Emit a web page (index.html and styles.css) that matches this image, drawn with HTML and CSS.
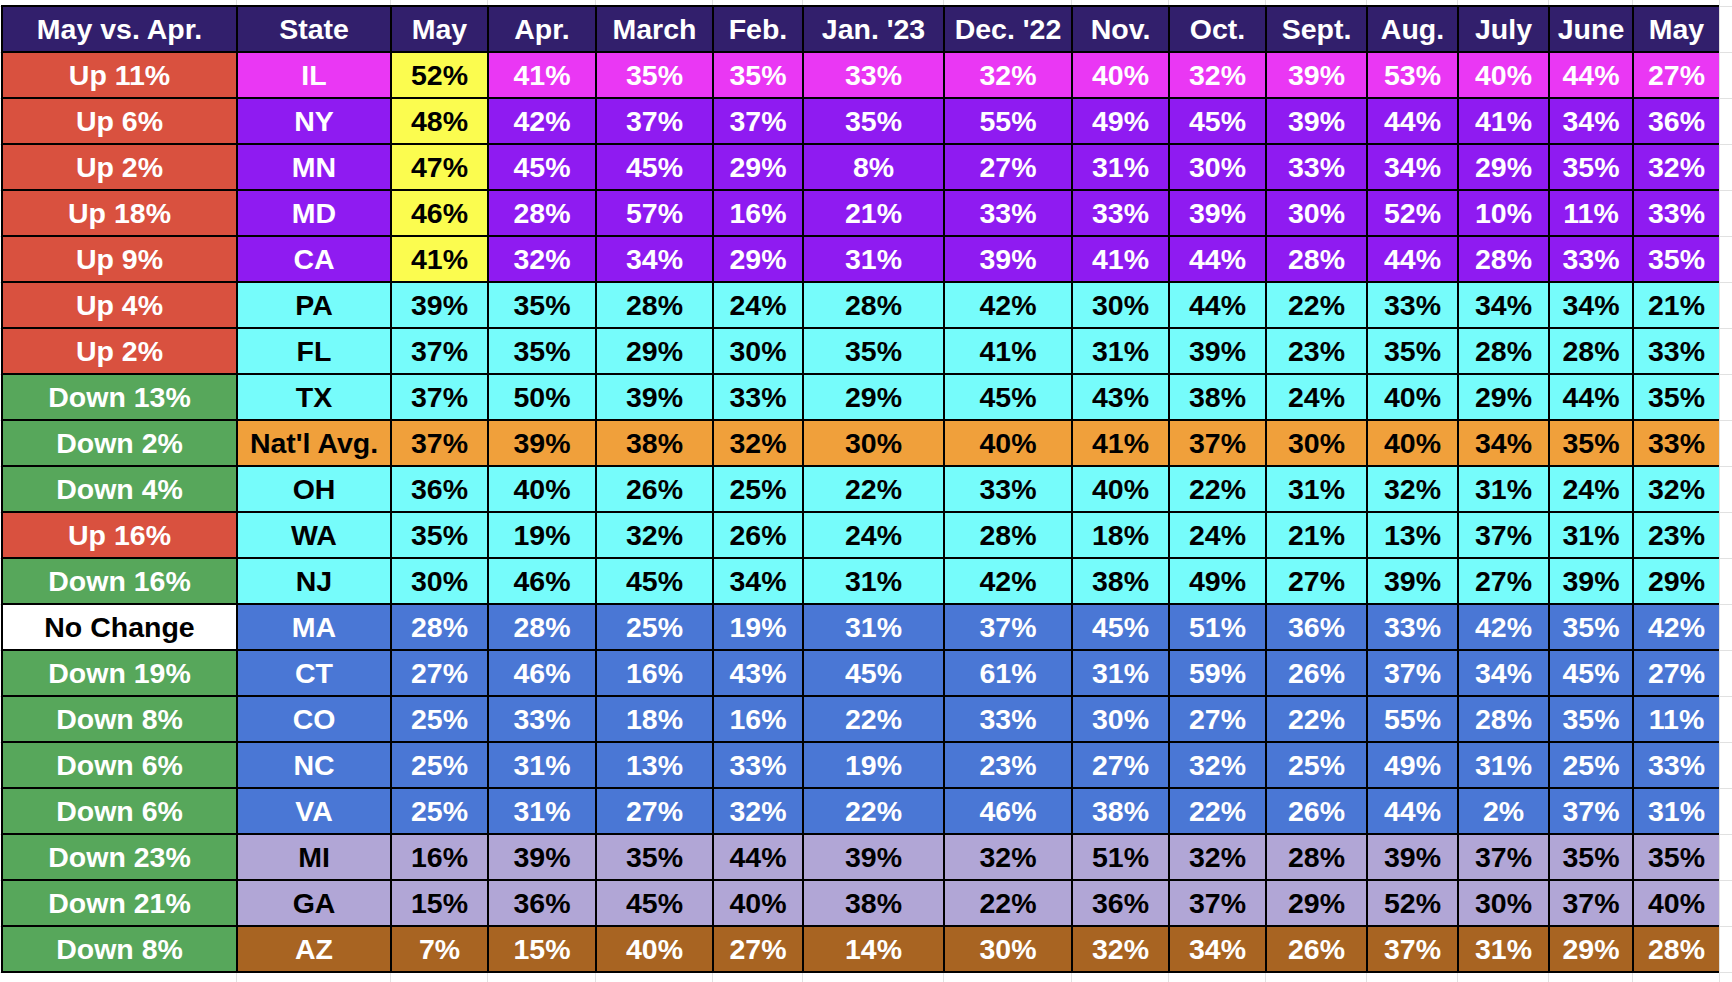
FILE: index.html
```html
<!DOCTYPE html>
<html lang="en">
<head>
<meta charset="utf-8">
<title>May vs. Apr. by State</title>
<link rel="stylesheet" href="styles.css">
</head>
<body>
<div class="sheet">
  <div class="table">
    <div class="row head">
      <div class="cell">May vs. Apr.</div><div class="cell">State</div><div class="cell">May</div><div class="cell">Apr.</div><div class="cell">March</div><div class="cell">Feb.</div><div class="cell">Jan. '23</div><div class="cell">Dec. '22</div><div class="cell">Nov.</div><div class="cell">Oct.</div><div class="cell">Sept.</div><div class="cell">Aug.</div><div class="cell">July</div><div class="cell">June</div><div class="cell">May</div>
    </div>
    <div class="row magenta">
      <div class="cell up">Up 11%</div><div class="cell">IL</div><div class="cell hi">52%</div><div class="cell">41%</div><div class="cell">35%</div><div class="cell">35%</div><div class="cell">33%</div><div class="cell">32%</div><div class="cell">40%</div><div class="cell">32%</div><div class="cell">39%</div><div class="cell">53%</div><div class="cell">40%</div><div class="cell">44%</div><div class="cell">27%</div>
    </div>
    <div class="row purple">
      <div class="cell up">Up 6%</div><div class="cell">NY</div><div class="cell hi">48%</div><div class="cell">42%</div><div class="cell">37%</div><div class="cell">37%</div><div class="cell">35%</div><div class="cell">55%</div><div class="cell">49%</div><div class="cell">45%</div><div class="cell">39%</div><div class="cell">44%</div><div class="cell">41%</div><div class="cell">34%</div><div class="cell">36%</div>
    </div>
    <div class="row purple">
      <div class="cell up">Up 2%</div><div class="cell">MN</div><div class="cell hi">47%</div><div class="cell">45%</div><div class="cell">45%</div><div class="cell">29%</div><div class="cell">8%</div><div class="cell">27%</div><div class="cell">31%</div><div class="cell">30%</div><div class="cell">33%</div><div class="cell">34%</div><div class="cell">29%</div><div class="cell">35%</div><div class="cell">32%</div>
    </div>
    <div class="row purple">
      <div class="cell up">Up 18%</div><div class="cell">MD</div><div class="cell hi">46%</div><div class="cell">28%</div><div class="cell">57%</div><div class="cell">16%</div><div class="cell">21%</div><div class="cell">33%</div><div class="cell">33%</div><div class="cell">39%</div><div class="cell">30%</div><div class="cell">52%</div><div class="cell">10%</div><div class="cell">11%</div><div class="cell">33%</div>
    </div>
    <div class="row purple">
      <div class="cell up">Up 9%</div><div class="cell">CA</div><div class="cell hi">41%</div><div class="cell">32%</div><div class="cell">34%</div><div class="cell">29%</div><div class="cell">31%</div><div class="cell">39%</div><div class="cell">41%</div><div class="cell">44%</div><div class="cell">28%</div><div class="cell">44%</div><div class="cell">28%</div><div class="cell">33%</div><div class="cell">35%</div>
    </div>
    <div class="row cyan">
      <div class="cell up">Up 4%</div><div class="cell">PA</div><div class="cell">39%</div><div class="cell">35%</div><div class="cell">28%</div><div class="cell">24%</div><div class="cell">28%</div><div class="cell">42%</div><div class="cell">30%</div><div class="cell">44%</div><div class="cell">22%</div><div class="cell">33%</div><div class="cell">34%</div><div class="cell">34%</div><div class="cell">21%</div>
    </div>
    <div class="row cyan">
      <div class="cell up">Up 2%</div><div class="cell">FL</div><div class="cell">37%</div><div class="cell">35%</div><div class="cell">29%</div><div class="cell">30%</div><div class="cell">35%</div><div class="cell">41%</div><div class="cell">31%</div><div class="cell">39%</div><div class="cell">23%</div><div class="cell">35%</div><div class="cell">28%</div><div class="cell">28%</div><div class="cell">33%</div>
    </div>
    <div class="row cyan">
      <div class="cell down">Down 13%</div><div class="cell">TX</div><div class="cell">37%</div><div class="cell">50%</div><div class="cell">39%</div><div class="cell">33%</div><div class="cell">29%</div><div class="cell">45%</div><div class="cell">43%</div><div class="cell">38%</div><div class="cell">24%</div><div class="cell">40%</div><div class="cell">29%</div><div class="cell">44%</div><div class="cell">35%</div>
    </div>
    <div class="row orange">
      <div class="cell down">Down 2%</div><div class="cell">Nat'l Avg.</div><div class="cell">37%</div><div class="cell">39%</div><div class="cell">38%</div><div class="cell">32%</div><div class="cell">30%</div><div class="cell">40%</div><div class="cell">41%</div><div class="cell">37%</div><div class="cell">30%</div><div class="cell">40%</div><div class="cell">34%</div><div class="cell">35%</div><div class="cell">33%</div>
    </div>
    <div class="row cyan">
      <div class="cell down">Down 4%</div><div class="cell">OH</div><div class="cell">36%</div><div class="cell">40%</div><div class="cell">26%</div><div class="cell">25%</div><div class="cell">22%</div><div class="cell">33%</div><div class="cell">40%</div><div class="cell">22%</div><div class="cell">31%</div><div class="cell">32%</div><div class="cell">31%</div><div class="cell">24%</div><div class="cell">32%</div>
    </div>
    <div class="row cyan">
      <div class="cell up">Up 16%</div><div class="cell">WA</div><div class="cell">35%</div><div class="cell">19%</div><div class="cell">32%</div><div class="cell">26%</div><div class="cell">24%</div><div class="cell">28%</div><div class="cell">18%</div><div class="cell">24%</div><div class="cell">21%</div><div class="cell">13%</div><div class="cell">37%</div><div class="cell">31%</div><div class="cell">23%</div>
    </div>
    <div class="row cyan">
      <div class="cell down">Down 16%</div><div class="cell">NJ</div><div class="cell">30%</div><div class="cell">46%</div><div class="cell">45%</div><div class="cell">34%</div><div class="cell">31%</div><div class="cell">42%</div><div class="cell">38%</div><div class="cell">49%</div><div class="cell">27%</div><div class="cell">39%</div><div class="cell">27%</div><div class="cell">39%</div><div class="cell">29%</div>
    </div>
    <div class="row blue">
      <div class="cell same">No Change</div><div class="cell">MA</div><div class="cell">28%</div><div class="cell">28%</div><div class="cell">25%</div><div class="cell">19%</div><div class="cell">31%</div><div class="cell">37%</div><div class="cell">45%</div><div class="cell">51%</div><div class="cell">36%</div><div class="cell">33%</div><div class="cell">42%</div><div class="cell">35%</div><div class="cell">42%</div>
    </div>
    <div class="row blue">
      <div class="cell down">Down 19%</div><div class="cell">CT</div><div class="cell">27%</div><div class="cell">46%</div><div class="cell">16%</div><div class="cell">43%</div><div class="cell">45%</div><div class="cell">61%</div><div class="cell">31%</div><div class="cell">59%</div><div class="cell">26%</div><div class="cell">37%</div><div class="cell">34%</div><div class="cell">45%</div><div class="cell">27%</div>
    </div>
    <div class="row blue">
      <div class="cell down">Down 8%</div><div class="cell">CO</div><div class="cell">25%</div><div class="cell">33%</div><div class="cell">18%</div><div class="cell">16%</div><div class="cell">22%</div><div class="cell">33%</div><div class="cell">30%</div><div class="cell">27%</div><div class="cell">22%</div><div class="cell">55%</div><div class="cell">28%</div><div class="cell">35%</div><div class="cell">11%</div>
    </div>
    <div class="row blue">
      <div class="cell down">Down 6%</div><div class="cell">NC</div><div class="cell">25%</div><div class="cell">31%</div><div class="cell">13%</div><div class="cell">33%</div><div class="cell">19%</div><div class="cell">23%</div><div class="cell">27%</div><div class="cell">32%</div><div class="cell">25%</div><div class="cell">49%</div><div class="cell">31%</div><div class="cell">25%</div><div class="cell">33%</div>
    </div>
    <div class="row blue">
      <div class="cell down">Down 6%</div><div class="cell">VA</div><div class="cell">25%</div><div class="cell">31%</div><div class="cell">27%</div><div class="cell">32%</div><div class="cell">22%</div><div class="cell">46%</div><div class="cell">38%</div><div class="cell">22%</div><div class="cell">26%</div><div class="cell">44%</div><div class="cell">2%</div><div class="cell">37%</div><div class="cell">31%</div>
    </div>
    <div class="row lav">
      <div class="cell down">Down 23%</div><div class="cell">MI</div><div class="cell">16%</div><div class="cell">39%</div><div class="cell">35%</div><div class="cell">44%</div><div class="cell">39%</div><div class="cell">32%</div><div class="cell">51%</div><div class="cell">32%</div><div class="cell">28%</div><div class="cell">39%</div><div class="cell">37%</div><div class="cell">35%</div><div class="cell">35%</div>
    </div>
    <div class="row lav">
      <div class="cell down">Down 21%</div><div class="cell">GA</div><div class="cell">15%</div><div class="cell">36%</div><div class="cell">45%</div><div class="cell">40%</div><div class="cell">38%</div><div class="cell">22%</div><div class="cell">36%</div><div class="cell">37%</div><div class="cell">29%</div><div class="cell">52%</div><div class="cell">30%</div><div class="cell">37%</div><div class="cell">40%</div>
    </div>
    <div class="row brown">
      <div class="cell down">Down 8%</div><div class="cell">AZ</div><div class="cell">7%</div><div class="cell">15%</div><div class="cell">40%</div><div class="cell">27%</div><div class="cell">14%</div><div class="cell">30%</div><div class="cell">32%</div><div class="cell">34%</div><div class="cell">26%</div><div class="cell">37%</div><div class="cell">31%</div><div class="cell">29%</div><div class="cell">28%</div>
    </div>
  </div>
</div>
</body>
</html>
```

FILE: styles.css
```css
html, body {
  margin: 0;
  padding: 0;
  background: #ffffff;
}

.sheet {
  --grid: #e1e1e1;
  box-sizing: border-box;
  width: 1732px;
  height: 982px;
  padding: 5px 0 0 1px;
  overflow: hidden;
  background:
    linear-gradient(var(--grid), var(--grid)) 236px 0 / 1px 100% no-repeat,
    linear-gradient(var(--grid), var(--grid)) 390px 0 / 1px 100% no-repeat,
    linear-gradient(var(--grid), var(--grid)) 487px 0 / 1px 100% no-repeat,
    linear-gradient(var(--grid), var(--grid)) 595px 0 / 1px 100% no-repeat,
    linear-gradient(var(--grid), var(--grid)) 712px 0 / 1px 100% no-repeat,
    linear-gradient(var(--grid), var(--grid)) 802px 0 / 1px 100% no-repeat,
    linear-gradient(var(--grid), var(--grid)) 943px 0 / 1px 100% no-repeat,
    linear-gradient(var(--grid), var(--grid)) 1071px 0 / 1px 100% no-repeat,
    linear-gradient(var(--grid), var(--grid)) 1168px 0 / 1px 100% no-repeat,
    linear-gradient(var(--grid), var(--grid)) 1265px 0 / 1px 100% no-repeat,
    linear-gradient(var(--grid), var(--grid)) 1366px 0 / 1px 100% no-repeat,
    linear-gradient(var(--grid), var(--grid)) 1457px 0 / 1px 100% no-repeat,
    linear-gradient(var(--grid), var(--grid)) 1548px 0 / 1px 100% no-repeat,
    linear-gradient(var(--grid), var(--grid)) 1632px 0 / 1px 100% no-repeat,
    linear-gradient(var(--grid), var(--grid)) 1719px 0 / 1px 100% no-repeat,
    linear-gradient(to bottom, var(--grid) 1px, transparent 1px) 0 6px / 100% 46px repeat-y,
    #ffffff;
}

.table {
  --cols: 233px 152px 95px 106px 115px 88px 139px 126px 95px 95px 99px 89px 89px 82px 85px;
  width: 1718px;
  box-sizing: border-box;
  padding: 2px 0 2px 2px;
  display: flex;
  flex-direction: column;
  gap: 2px;
  background: #000000;
}

.row {
  display: grid;
  grid-template-columns: var(--cols);
  column-gap: 2px;
  height: 44px;
}

.cell {
  display: flex;
  align-items: center;
  justify-content: center;
  font-family: "Liberation Sans", Arial, sans-serif;
  font-weight: bold;
  font-size: 28.5px;
  line-height: 1;
  color: #ffffff;
  white-space: nowrap;
  overflow: hidden;
}

.row.head .cell { background: #321f6c; color: #ffffff; }
.row.magenta .cell { background: #ea37f4; color: #ffffff; }
.row.purple .cell { background: #8f1bf1; color: #ffffff; }
.row.cyan .cell { background: #76fcfb; color: #000000; }
.row.orange .cell { background: #f0a03b; color: #000000; }
.row.blue .cell { background: #4a77d5; color: #ffffff; }
.row.lav .cell { background: #b1a6d6; color: #000000; }
.row.brown .cell { background: #a86422; color: #ffffff; }

.row .cell.up { background: #d9513f; color: #ffffff; }
.row .cell.down { background: #57a75b; color: #ffffff; }
.row .cell.same { background: #ffffff; color: #000000; }
.row .cell.hi { background: #fbfc4f; color: #000000; }
```
